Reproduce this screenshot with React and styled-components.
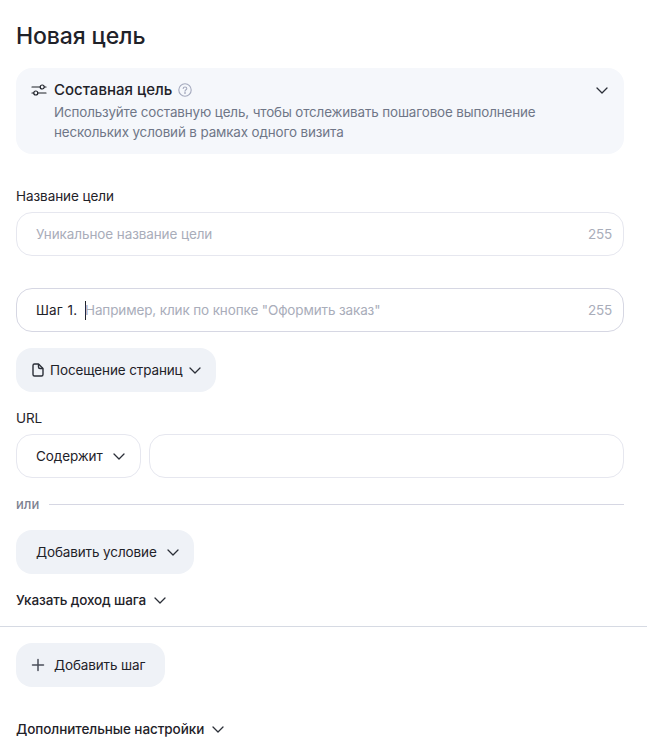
import React from "react";
import styled, { createGlobalStyle } from "styled-components";

const Global = createGlobalStyle`
  html, body { margin: 0; padding: 0; background: #fff; }
  body { font-family: Inter, "Noto Sans", sans-serif; color: #1f2229; }
`;
const Page = styled.div`
  width: 647px; height: 749px; overflow: hidden; display: flex; flex-direction: column;
`;
const Section = styled.div`
  padding: 0 23px 0 16px;
  display: flex; flex-direction: column; align-items: flex-start;
`;
const Title = styled.h1`
  margin: 0; height: 68px; padding-top: 20px; box-sizing: border-box;
  font-size: 23px; line-height: 32px; font-weight: 500; color: #1f2229; letter-spacing: -0.1px;
`;
const Card = styled.div`
  box-sizing: border-box; align-self: stretch; height: 86px; background: #f5f7fb; border-radius: 16px;
  padding: 12px 15px 0 15px; display: grid; grid-template-columns: 23px 1fr 14px;
`;
const CardIcon = styled.div`
  display: flex; align-items: center; height: 20px; color: #1f2229;
`;
const CardTitleRow = styled.div`
  display: flex; align-items: center; gap: 6px; height: 20px;
  font-size: 15px; font-weight: 500; line-height: 20px; color: #1f2229; letter-spacing: 0;
`;
const CardText = styled.p`
  margin: 2px 0 0; font-size: 13.4px; line-height: 20px; color: #6f7687; white-space: nowrap; letter-spacing: -0.12px;
`;
const Label = styled.div`
  font-size: 13.5px; line-height: 20px; color: #1f2229; height: 20px; letter-spacing: -0.07px;
  margin: ${p => p.$m || "0"};
`;
const Field = styled.div`
  box-sizing: border-box; align-self: stretch; height: 44px; border-radius: 16px; background: #fff;
  border: 1px solid ${p => (p.$focus ? "#d6d7e3" : "#e6e7ef")};
  display: flex; align-items: center; padding: 0 11px 0 19px;
  font-size: 13.5px; letter-spacing: -0.1px; margin: ${p => p.$m || "0"};
  flex: ${p => (p.$grow ? "1" : "none")};
`;
const Placeholder = styled.span`
  color: #a9adba; flex: 1; white-space: nowrap; letter-spacing: ${p => p.$ls || "-0.1px"};
  margin-left: ${p => p.$ml || "0"};
`;
const Count = styled.span`
  color: #a9adba; letter-spacing: -0.2px;
`;
const StepLabel = styled.span`
  color: #1f2229; white-space: nowrap; width: 49px; flex: none; word-spacing: 1px; letter-spacing: 0.1px;
`;
const Caret = styled.span`
  width: 1px; height: 19px; background: #1f2229; flex: none;
`;
const Button = styled.div`
  box-sizing: border-box; height: 44px; border-radius: 16px; background: #eff2f7;
  display: inline-flex; align-items: center; gap: ${p => p.$gap || "8px"};
  padding: ${p => p.$pad || "0 20px"}; font-size: 13.5px; letter-spacing: -0.12px; color: #1f2229; white-space: nowrap;
  margin: ${p => p.$m || "0"};
`;
const Row = styled.div`
  align-self: stretch; display: flex; gap: 8px; height: 44px; margin: ${p => p.$m || "0"};
`;
const SelectBox = styled(Field)`
  width: 125px; flex: none; gap: 9px; color: #1f2229; padding-right: 0;
`;
const OrRow = styled.div`
  align-self: stretch; display: flex; align-items: center; gap: 10px; height: 20px; margin-top: 16px;
  font-size: 13px; font-weight: 500; color: #7d8191;
`;
const OrLine = styled.div`
  flex: 1; height: 1px; background: #d6d7e3;
`;
const Toggle = styled.div`
  display: inline-flex; align-items: center; gap: ${p => p.$gap || "7px"}; height: 20px; font-size: 13.5px; font-weight: 500;
  color: #1f2229; letter-spacing: ${p => p.$ls || "-0.1px"}; margin: ${p => p.$m || "0"};
`;
const Rule = styled.div`
  height: 1px; background: #d6dae3; margin-top: 16px; width: 647px; flex: none;
`;

const Chevron = () => (
  <svg width="14" height="14" viewBox="0 0 14 14" fill="none" stroke="#2b2f38" strokeWidth="1.3" strokeLinecap="round" strokeLinejoin="round" style={{ flex: "none" }}>
    <path d="M2 5 7 10 12 5" />
  </svg>
);
const Sliders = () => (
  <svg width="16" height="16" viewBox="0 0 16 16" fill="none" stroke="#1f2229" strokeWidth="1.2" strokeLinecap="round">
    <path d="M1 5H9M13.500 5H15M1 11H2.500M7 11H15" />
    <circle cx="11.200" cy="5" r="2" />
    <circle cx="4.800" cy="11" r="2" />
  </svg>
);
const Help = () => (
  <svg width="14" height="14" viewBox="0 0 14 14" fill="none" stroke="#a4a9bd" strokeWidth="1.1" strokeLinecap="round">
    <circle cx="7" cy="7" r="6.200" />
    <path d="M5.200 5.500C5.200 4.500 6 4 7 4s1.800.6 1.800 1.500C8.800 6.800 7 6.800 7 8.300" />
    <circle cx="7" cy="10" r=".35" />
  </svg>
);
const FileIcon = () => (
  <svg width="14" height="16" viewBox="0 0 14 16" fill="none" stroke="#2b2f38" strokeWidth="1.4" strokeLinejoin="round" style={{ flex: "none" }}>
    <path d="M2 3.500C2 2.500 2.600 2 3.500 2H7.500L12 6.500V12.500C12 13.500 11.400 14 10.500 14H3.500C2.600 14 2 13.500 2 12.500Z" />
    <path d="M7.500 2V5C7.500 6 8 6.500 9 6.500H12" />
  </svg>
);
const Plus = () => (
  <svg width="16" height="16" viewBox="0 0 16 16" fill="none" stroke="#4a4e59" strokeWidth="1.5" strokeLinecap="round" style={{ flex: "none" }}>
    <path d="M8 2.500V13.500M2.500 8H13.500" />
  </svg>
);

export default function App() {
  return (
    <Page>
      <Global />
      <Section>
        <Title>Новая цель</Title>
        <Card>
          <CardIcon><Sliders /></CardIcon>
          <div>
            <CardTitleRow>Составная цель <Help /></CardTitleRow>
            <CardText>
              Используйте составную цель, чтобы отслеживать пошаговое выполнение<br />
              нескольких условий в рамках одного визита
            </CardText>
          </div>
          <CardIcon><Chevron /></CardIcon>
        </Card>
        <Label $m="32px 0 6px">Название цели</Label>
        <Field>
          <Placeholder>Уникальное название цели</Placeholder>
          <Count>255</Count>
        </Field>
        <Field $focus $m="32px 0 0">
          <StepLabel>Шаг 1.</StepLabel>
          <Caret />
          <Placeholder $ls="-0.13px" $ml="-1px">Например, клик по кнопке "Оформить заказ"</Placeholder>
          <Count>255</Count>
        </Field>
        <Button $pad="0 14px 0 15px" $gap="5px" $m="16px 0 0">
          <FileIcon />Посещение страниц<Chevron />
        </Button>
        <Label $m="16px 0 6px">URL</Label>
        <Row>
          <SelectBox>Содержит <Chevron /></SelectBox>
          <Field $grow />
        </Row>
        <OrRow>или<OrLine /></OrRow>
        <Button $pad="0 14px 0 20px" $gap="9px" $m="16px 0 0">
          Добавить условие <Chevron />
        </Button>
        <Toggle $m="16px 0 0" $ls="-0.14px">Указать доход шага <Chevron /></Toggle>
      </Section>
      <Rule />
      <Section>
        <Button $pad="0 20px 0 14px" $gap="8px" $m="16px 0 0"><Plus />Добавить шаг</Button>
        <Toggle $m="32px 0 0" $gap="7px" $ls="-0.07px">Дополнительные настройки <Chevron /></Toggle>
      </Section>
    </Page>
  );
}
